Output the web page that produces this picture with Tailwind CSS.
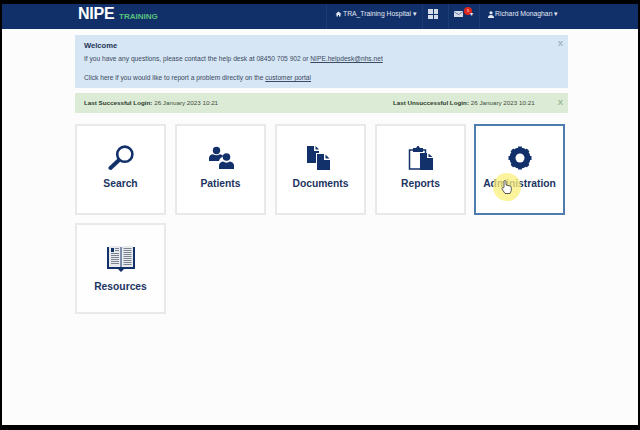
<!DOCTYPE html>
<html lang="en">
<head>
    <meta charset="UTF-8">
    <meta name="viewport" content="width=device-width, initial-scale=1.0">
    <title>NIPE Training</title>
    <script src="https://cdn.jsdelivr.net/npm/@tailwindcss/browser@4"></script>
</head>
<body class="w-[640px] h-[430px] overflow-hidden bg-black font-['Liberation_Sans',Arial,sans-serif]">
    <div class="ml-[2px] mr-[2px] mt-[4px] h-[421px] bg-[#fcfcfc] relative overflow-hidden">
        <!-- top bar -->
        <header class="h-[25px] bg-[#11306a] flex items-center pl-[76px] text-white">
            <span class="text-[16px] leading-none font-bold tracking-[-0.2px] w-[41px] mt-[-5px]">NIPE</span>
            <span class="text-[8px] leading-none font-bold text-[#58c27d] mt-[1px] w-[207px]">TRAINING</span>
            <nav class="flex items-center h-full text-[6.800px] text-[#e4e9f2]">
                <div class="h-full flex items-center gap-[1px] pb-[5px] pl-[8px] border-l border-[#1c3c78] w-[96px]">
                    <svg class="w-[7px] h-[6px]" viewBox="0 0 12 12" fill="currentColor"><path d="M6 1 0 6.500h2V11h3V8h2v3h3V6.500h2z"/></svg>
                    <span class="whitespace-nowrap">TRA_Training Hospital ▾</span>
                </div>
                <div class="h-full w-[26px] flex items-center pl-[5px] pb-[5px] border-l border-[#1c3c78]">
                    <div class="grid grid-cols-2 gap-[1px] w-[10px] h-[10px]">
                        <i class="bg-[#d5dce8]"></i><i class="bg-[#d5dce8]"></i><i class="bg-[#d5dce8]"></i><i class="bg-[#d5dce8]"></i>
                    </div>
                </div>
                <div class="h-full w-[31px] flex items-center pl-[5px] pb-[5px] border-l border-[#1c3c78] relative">
                    <svg class="w-[9px] h-[6px]" viewBox="0 0 18 12"><rect width="18" height="12" rx="1" fill="#d5dce8"/><path d="M1 2l8 5 8-5" fill="none" stroke="#11306a" stroke-width="1.200"/></svg>
                    <span class="absolute left-[15px] top-[3px] w-[8px] h-[8px] rounded-full bg-[#e0261c] text-white text-[4px] leading-[8px] text-center">5</span>
                    <span class="absolute left-[21px] top-[7px] text-[6px] leading-none">▾</span>
                </div>
                <div class="h-full flex items-center gap-[1px] pb-[5px] pl-[8px] border-l border-[#1c3c78] whitespace-nowrap">
                    <svg class="w-[6px] h-[7px]" viewBox="0 0 12 14" fill="currentColor"><circle cx="6" cy="3.500" r="3.200"/><path d="M0 14c0-4 2-6 6-6s6 2 6 6z"/></svg>
                    <span>Richard Monaghan ▾</span>
                </div>
            </nav>
        </header>

        <main class="pl-[73px] w-[566px] pt-[6px] text-[#3a4a63]">
            <section class="h-[53px] bg-[#d6e6f4] rounded-[1px] pl-[9px] pt-[5px] relative">
                <h2 class="text-[7.600px] leading-[11px] font-bold text-[#1f3557]">Welcome</h2>
                <p class="text-[6.650px] leading-[9px] mt-[3px]">If you have any questions, please contact the help desk at 08450 705 902 or <span class="underline">NIPE.helpdesk@nhs.net</span></p>
                <p class="text-[6.650px] leading-[9px] mt-[10px]">Click here if you would like to report a problem directly on the <span class="underline">customer portal</span></p>
                <span class="absolute right-[5px] top-[4px] text-[8px] leading-[9px] font-bold text-[#9fb0c0]">X</span>
            </section>
            <section class="h-[20px] mt-[5px] bg-[#dcebd6] rounded-[1px] pl-[9px] pr-[5px] flex items-center text-[6.250px] text-[#3c4a3c]">
                <span><b class="text-[#2b3a2b]">Last Successful Login:</b> 26 January 2023 10:21</span>
                <span class="ml-auto"><b class="text-[#2b3a2b]">Last Unsuccessful Login:</b> 26 January 2023 10:21</span>
                <span class="ml-[23px] text-[8px] font-bold text-[#9fb39a]">X</span>
            </section>

            <div class="grid grid-cols-[91px_91px_91px_91px_91px] auto-rows-[91px] gap-x-[9px] gap-y-[8px] mt-[11px] text-[#1c3461] font-bold text-[10.300px]">
                <div class="border-2 border-[#e9e9ec] bg-white flex flex-col items-center pt-[19px]">
                    <svg class="w-[26px] h-[26px]" viewBox="0 0 26 26" fill="none" stroke="#12306a"><circle cx="16.800" cy="9.200" r="7.600" stroke-width="2.600"/><path d="M10.500 15.500 2.500 23" stroke-width="4" stroke-linecap="round"/></svg>
                    <span class="mt-[6px] leading-[13px]">Search</span>
                </div>
                <div class="border-2 border-[#e9e9ec] bg-white flex flex-col items-center pt-[19px]">
                    <svg class="w-[26px] h-[26px]" viewBox="0 0 26 26" fill="#12306a"><circle cx="8.500" cy="5.500" r="3.700"/><path d="M1 16v-3c0-2.500 2-3.500 4-3.800 2 1.500 5 1.500 7 0 1.500.3 2.800 1 3.300 2-2.300 1.200-3.800 2.700-4.300 4.800z"/><circle cx="18.500" cy="12" r="3.800"/><path d="M11 24v-3.500c0-2.500 2-3.500 4-4 2 1.500 5 1.500 7 0 2 .5 4 1.500 4 4V24z"/></svg>
                    <span class="mt-[6px] leading-[13px]">Patients</span>
                </div>
                <div class="border-2 border-[#e9e9ec] bg-white flex flex-col items-center pt-[19px]">
                    <svg class="w-[26px] h-[26px] ml-[-3px]" viewBox="0 0 26 26" fill="#12306a"><path d="M1 1h7v5h5v2h-3v10H1z"/><path d="M9.500 1v3.500H13z"/><path d="M11 9h7v6h6v10H11z"/><path d="M19.500 9.500V13.500H23.500z"/></svg>
                    <span class="mt-[6px] leading-[13px]">Documents</span>
                </div>
                <div class="border-2 border-[#e9e9ec] bg-white flex flex-col items-center pt-[19px]">
                    <svg class="w-[26px] h-[26px]" viewBox="0 0 26 26"><path d="M1.500 5h16v19h-16z" fill="none" stroke="#12306a" stroke-width="1.500"/><path d="M5 3h3l1.500-2h1L12 3h3v4H5z" fill="#12306a"/><path d="M12 8h7v5h6v12H12z" fill="#12306a"/><path d="M20.500 8.500v3.500H24.500z" fill="#12306a"/></svg>
                    <span class="mt-[6px] leading-[13px]">Reports</span>
                </div>
                <div class="border-2 border-[#4f7cae] bg-white flex flex-col items-center pt-[19px] ml-[-1px] mr-[1px]">
                    <svg class="w-[26px] h-[26px]" viewBox="0 0 26 26"><circle cx="13" cy="13" r="7.500" fill="none" stroke="#12306a" stroke-width="6"/><path d="M13 1.500v23M1.500 13h23M4.900 4.900l16.200 16.200M21.100 4.900 4.900 21.100" stroke="#12306a" stroke-width="3.800"/><circle cx="13" cy="13" r="4.500" fill="#fff"/></svg>
                    <span class="mt-[6px] leading-[13px]">Administration</span>
                </div>
                <div class="border-2 border-[#e9e9ec] bg-[#fefefe] flex flex-col items-center pt-[20px]">
                    <svg class="w-[30px] h-[28px]" viewBox="0 0 30 28"><path d="M1 2h28v22H18l-3 3-3-3H1z" fill="#12306a"/><path d="M3 1h11.500v21H3zM15.500 1H27v21H15.500z" fill="#e8eaee"/><path d="M5 3h3v4H5z" fill="#12306a"/><path d="M9 3.500h4M9 5.500h4M5 8.500h8M5 10.500h8M5 12.500h8M5 14.500h8M5 16.500h8M5 18.500h8M17.500 3.500h8M17.500 5.500h8M17.500 7.500h8M17.500 9.500h8M17.500 11.500h8M17.500 13.500h8M17.500 15.500h8M17.500 17.500h8M17.500 19.500h8" stroke="#7c8492"/></svg>
                    <span class="mt-[7px] leading-[13px]">Resources</span>
                </div>
            </div>
        </main>

        <!-- cursor highlight from the recording -->
        <div class="absolute left-[491px] top-[169px] w-[28px] h-[28px] rounded-full bg-[#fbef7c]/75"></div>
        <svg class="absolute left-[499px] top-[176px] w-[11px] h-[14px]" viewBox="0 0 11 14"><path d="M3 7V1.500a1 1 0 0 1 2 0V5l4 1c1 .3 1.300 1 1.300 2v2.500L9 13.500H4L1 9c-.5-1 .8-2 1.500-1z" fill="#fff" stroke="#333" stroke-width=".8"/></svg>
    </div>
</body>
</html>
